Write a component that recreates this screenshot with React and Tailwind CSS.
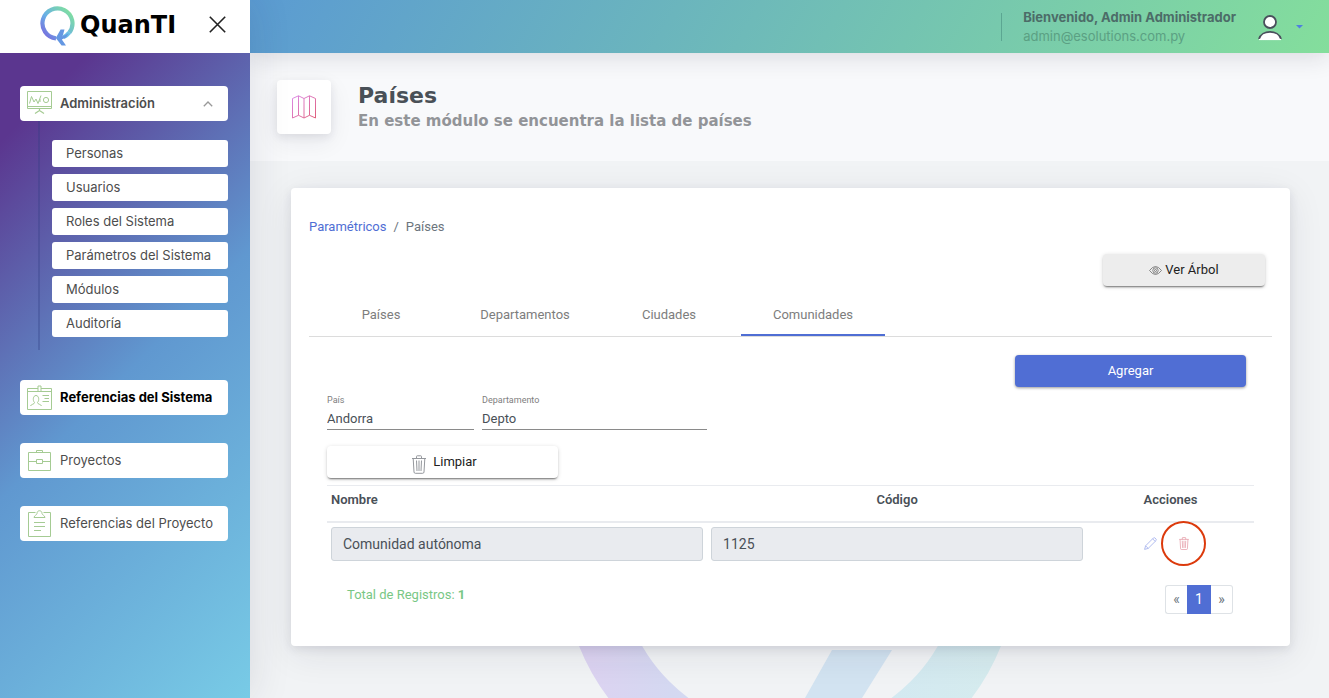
import { useState } from "react";
import clsx from "clsx";

const submenu = ["Personas", "Usuarios", "Roles del Sistema", "Parámetros del Sistema", "Módulos", "Auditoría"];
const tabs = ["Países", "Departamentos", "Ciudades", "Comunidades"];

function Logo() {
  return (
    <a href="#" className="flex items-center gap-1">
      <svg width="36" height="42" viewBox="0 0 36 42" fill="none" aria-hidden="true">
        <defs>
          <linearGradient id="logo-ring" x1="3" y1="32" x2="31" y2="6" gradientUnits="userSpaceOnUse">
            <stop offset="0" stopColor="#7a63dc" />
            <stop offset="0.45" stopColor="#68b0e6" />
            <stop offset="1" stopColor="#80dfa0" />
          </linearGradient>
        </defs>
        <path d="M16 32.3A15 15 0 1 1 29.3 26.6" stroke="url(#logo-ring)" strokeWidth="4.2" />
        <path d="M29.3 26.6A15 15 0 0 1 23.5 31.2" stroke="#6cbfe6" strokeWidth="4.2" />
        <path d="M24.5 23.5H20.6L15.8 32L21.6 39.6H26L21.8 33.4L26 31.6L28.6 27.6L22.6 30.2Z" fill="#6497e2" />
      </svg>
      <span className="mb-1 font-['DejaVu_Sans',sans-serif] text-[24px] leading-6 font-bold text-black">QuanTI</span>
    </a>
  );
}

function PresentationIcon() {
  return (
    <svg width="26" height="26" viewBox="0 0 26 26" fill="none" stroke="#a5cb93" aria-hidden="true">
      <path d="M0.5 0.5H24.5V17.500H0.5ZM1 15.500H24" />
      <path d="M12.5 17.500V19.500M8 22.500L12.5 19.500L17 22.500" strokeWidth="1.2" />
      <path d="M2.500 12.500L4.500 5.500L7 11L9 8L11 12.500L14 4.500" />
      <circle cx="19" cy="9" r="2.6" />
      <path d="M13 11V8" />
    </svg>
  );
}

function IdIcon() {
  return (
    <svg width="26" height="26" viewBox="0 0 26 26" fill="none" stroke="#a5cb93" aria-hidden="true">
      <path d="M11 3.500H0.500V24.500H24.500V3.500H14M0.500 6.500H11M14 6.500H24.500" />
      <path d="M11 1H14V6.500H11Z" />
      <path d="M3.500 21C4 19 7.500 19.500 7.500 17.500C5.500 15.500 6 10.500 9 10.500S12.500 15.500 10.500 17.500C10.500 19.500 14 19 14.500 21" />
      <path d="M15.500 10.500H22M17.500 13.500H22M15.500 16.500H22" />
    </svg>
  );
}

function BriefcaseIcon() {
  return (
    <svg width="26" height="26" viewBox="0 0 26 26" fill="none" stroke="#a5cb93" aria-hidden="true">
      <path d="M1.500 4.500H23.500V22.500H1.500ZM9.500 4.500V2.500H15.500V4.500M1.500 13.500H9.500M15.500 13.500H23.500" />
      <path d="M9.500 11.500H15.500V15.500H9.500Z" />
    </svg>
  );
}

function ClipboardIcon() {
  return (
    <svg width="26" height="28" viewBox="0 0 26 28" fill="none" stroke="#a5cb93" aria-hidden="true">
      <path d="M8.500 2.500H1.500V26.500H23.500V2.500H16.500" />
      <path d="M7 7.500C7.500 5 9.500 5.500 10 3.500C10 -0.200 15 -0.200 15 3.500C15.500 5.500 17.500 5 18 7.500Z" />
      <path d="M7 12.500H18M7 16.500H18M7 20.500H14" />
    </svg>
  );
}

function MapIcon() {
  return (
    <svg width="26" height="26" viewBox="0 0 26 26" fill="none" stroke="url(#map-stroke)" aria-hidden="true">
      <defs>
        <linearGradient id="map-stroke" x1="0" y1="0" x2="26" y2="26" gradientUnits="userSpaceOnUse">
          <stop offset="0" stopColor="#dc8ff0" />
          <stop offset="1" stopColor="#e05a72" />
        </linearGradient>
      </defs>
      <path d="M1.500 4.500L7.500 1.800L13 4.500L18.500 1.800L24.500 4.500V24L18.500 21.300L13 24L7.500 21.300L1.500 24Z" />
      <path d="M7.500 1.800V21.300M13 4.500V24M18.500 1.800V21.300" />
    </svg>
  );
}

function TrashIcon({ className }) {
  return (
    <svg viewBox="0 0 14 19" fill="none" stroke="currentColor" className={className} aria-hidden="true">
      <path d="M0 3.500H14M4.500 3.500V1.500Q4.500 0.800 5.200 0.800H8.800Q9.500 0.800 9.500 1.500V3.500" />
      <path d="M1.200 3.500L2 17Q2.100 18.300 3.300 18.300H10.700Q11.900 18.300 12 17L12.800 3.500" />
      <path d="M4.500 5.500L5 16M7 5.500V16M9.500 5.500L9 16" />
    </svg>
  );
}

function EyeIcon() {
  return (
    <svg width="13" height="9" viewBox="0 0 13 9" fill="none" stroke="#6b6b6b" strokeWidth="0.8" aria-hidden="true">
      <path d="M0.500 4.500Q6.500 -3.500 12.500 4.500Q6.500 12.500 0.500 4.500Z" />
      <circle cx="6.500" cy="4.500" r="2.700" />
      <circle cx="6.500" cy="4.500" r="1" />
    </svg>
  );
}

function PencilIcon() {
  return (
    <svg width="13" height="13" viewBox="0 0 13 13" fill="none" stroke="#a9b6ee" strokeWidth="0.9" aria-hidden="true">
      <path d="M0.600 12.400L1.600 8.800L9.400 1Q10.200 0.300 11 1L12 2Q12.700 2.800 12 3.600L4.200 11.400Z" />
      <path d="M1.600 8.800L4.200 11.400M8.600 1.800L11.200 4.400" />
    </svg>
  );
}

function UserIcon() {
  return (
    <svg width="26" height="28" viewBox="0 0 26 28" fill="#fff" stroke="#4a4f5c" strokeWidth="1.800" aria-hidden="true">
      <circle cx="13" cy="9" r="6" />
      <path d="M2 26C4.500 16.500 21.500 16.500 24 26" />
      <path d="M2 26.500H24" stroke="#fff" strokeWidth="1.200" />
    </svg>
  );
}

function MenuItem({ icon, label, active, open }) {
  return (
    <a
      href="#"
      className={clsx(
        "flex h-[35px] items-center rounded-[4px] bg-white pr-[15px] pl-[7px] text-[13px] whitespace-nowrap text-[#4d4d4d]",
        active && "font-bold text-black!",
        open && "font-semibold"
      )}
    >
      <span className="w-[33px] shrink-0">{icon}</span>
      <span className="min-w-0 flex-1">{label}</span>
      {open && (
        <svg width="10" height="6" viewBox="0 0 10 6" fill="none" stroke="#999" strokeWidth="1.300" aria-hidden="true">
          <path d="M0.800 5.300L5 1L9.200 5.300" />
        </svg>
      )}
    </a>
  );
}

function Sidebar() {
  return (
    <aside className="relative z-20 flex w-[250px] shrink-0 flex-col shadow-[0_0_40px_rgba(30,30,60,0.12)]">
      <div className="flex h-[53px] items-center justify-between bg-white pr-6 pl-10">
        <Logo />
        <button type="button" aria-label="Cerrar menú" className="mb-1">
          <svg width="17" height="17" viewBox="0 0 17 17" stroke="#222" strokeWidth="1.600" aria-hidden="true">
            <path d="M0.800 0.800L16.200 16.200M16.200 0.800L0.800 16.200" />
          </svg>
        </button>
      </div>
      <nav className="flex-1 bg-[linear-gradient(135deg,#5b368f_10%,#6098d0_50%,#78cbe6_100%)] pt-[33px] pr-[22px] pl-5">
        <MenuItem icon={<PresentationIcon />} label="Administración" open />
        <ul className="mb-[30px] ml-[18px] flex flex-col gap-[7px] border-l-2 border-[#2d3c82]/30 pt-[19px] pb-[13px] pl-3">
          {submenu.map((item) => (
            <li key={item}>
              <a href="#" className="flex h-[27px] items-center rounded-[3px] bg-white px-[14px] text-[13px] text-[#4d4d4d]">
                {item}
              </a>
            </li>
          ))}
        </ul>
        <div className="flex flex-col gap-7">
          <MenuItem icon={<IdIcon />} label="Referencias del Sistema" active />
          <MenuItem icon={<BriefcaseIcon />} label="Proyectos" />
          <MenuItem icon={<ClipboardIcon />} label="Referencias del Proyecto" />
        </div>
      </nav>
    </aside>
  );
}

function Header() {
  return (
    <header className="relative z-10 flex h-[53px] items-center justify-end bg-[linear-gradient(120deg,#5b9bd2,#84de9c)] pr-[26px] shadow-[0_4px_24px_rgba(30,30,60,0.14)]">
      <div className="h-7 w-px bg-[#4a8f80]/60" />
      <div className="ml-[21px] text-[13px] leading-[19px]">
        <p className="font-bold text-[#4c6c68]">Bienvenido, Admin Administrador</p>
        <p className="text-[#5ba083]">admin@esolutions.com.py</p>
      </div>
      <button type="button" aria-label="Cuenta" className="ml-[21px] flex items-center gap-[13px]">
        <UserIcon />
        <svg width="7" height="4" viewBox="0 0 7 4" fill="#4f7fe0" aria-hidden="true">
          <path d="M0 0H7L3.500 3.600Z" />
        </svg>
      </button>
    </header>
  );
}

function Watermark() {
  return (
    <svg
      viewBox="0 0 458 365"
      width="458"
      height="365"
      fill="none"
      className="absolute bottom-0 left-1/2 -translate-x-1/2"
      aria-hidden="true"
    >
      <defs>
        <linearGradient id="wm-ring" x1="30" y1="0" x2="428" y2="0" gradientUnits="userSpaceOnUse">
          <stop offset="0" stopColor="#dcd3f1" />
          <stop offset="0.200" stopColor="#d4d8f1" />
          <stop offset="0.750" stopColor="#d3e9f1" />
          <stop offset="1" stopColor="#d5ebee" />
        </linearGradient>
      </defs>
      <circle cx="229" cy="228" r="199" stroke="url(#wm-ring)" strokeWidth="57" />
      <path d="M271 317H331L301 365H244Z" fill="#d2e3f1" />
    </svg>
  );
}

function Field({ id, label, value, className }) {
  return (
    <div className={clsx("border-b border-[#8a8a8a]", className)}>
      <label htmlFor={id} className="block text-[9px] leading-[14px] text-[#808080]">{label}</label>
      <input id={id} defaultValue={value} className="block h-[22px] w-full text-[13px] text-[#495057] outline-none" />
    </div>
  );
}

function CommunityTable() {
  const cell = "block h-[34px] w-full rounded-[3px] border border-[#ced4da] bg-[#e9ebef] px-[11px] text-[14px] text-[#495057]";
  return (
    <table className="mt-[7px] w-full table-fixed border-t border-[#e9ebef] text-[13px] text-[#495057]">
      <thead>
        <tr className="h-9 border-b-2 border-[#e9ebef]">
          <th className="w-[41%] px-1 pb-2 text-left font-semibold">Nombre</th>
          <th className="w-[41%] px-1 pb-2 text-center font-semibold">Código</th>
          <th className="px-1 pb-2 text-center font-semibold">Acciones</th>
        </tr>
      </thead>
      <tbody>
        <tr>
          <td className="p-1"><input aria-label="Nombre" readOnly value="Comunidad autónoma" className={cell} /></td>
          <td className="p-1"><input aria-label="Código" readOnly value="1125" className={cell} /></td>
          <td className="p-0">
            <div className="flex h-[42px] items-center pl-[57px]">
              <button type="button" aria-label="Editar"><PencilIcon /></button>
              <button
                type="button"
                aria-label="Eliminar"
                className="-my-1 ml-1 flex size-[45px] items-center justify-center rounded-full border-2 border-[#dc3a0c] text-[#e3939f]"
              >
                <TrashIcon className="h-[13px] w-[10px]" />
              </button>
            </div>
          </td>
        </tr>
      </tbody>
    </table>
  );
}

export default function App() {
  const [tab, setTab] = useState("Comunidades");

  return (
    <div className="flex min-h-screen bg-[#f1f3f5] font-[Inter,sans-serif]">
      <Sidebar />
      <div className="flex min-w-0 flex-1 flex-col">
        <Header />
        <main className="relative flex-1 overflow-hidden font-[Roboto,sans-serif]">
          <Watermark />
          <div className="flex h-[108px] items-center bg-[#f8f9fb] pl-[27px]">
            <div className="flex size-[54px] items-center justify-center rounded-[4px] bg-white shadow-[0_8px_24px_rgba(30,30,60,0.07),0_3px_8px_rgba(30,30,60,0.09)]">
              <MapIcon />
            </div>
            <div className="ml-[27px] font-['DejaVu_Sans',sans-serif] font-bold">
              <h1 className="text-[22px] leading-7 text-[#495057]">Países</h1>
              <p className="text-[15px] leading-[22px] text-[#929498]">En este módulo se encuentra la lista de países</p>
            </div>
          </div>

          <section className="relative mt-[27px] mr-[39px] mb-[52px] ml-[41px] rounded-[4px] bg-white pt-[29px] pr-[18px] pb-8 pl-[18px] shadow-[0_8px_36px_rgba(30,30,60,0.09),0_3px_10px_rgba(30,30,60,0.10)]">
            <nav className="flex gap-[7px] text-[13px] leading-5 text-[#6c757d]">
              <a href="#" className="text-[#4f6ed4]">Paramétricos</a>
              <span>/</span>
              <span>Países</span>
            </nav>

            <div className="mt-[17px] flex justify-end pr-[7px]">
              <button
                type="button"
                className="flex h-8 w-[162px] items-center justify-center gap-[3px] rounded-[4px] bg-[#ededed] text-[13px] text-[#212121] shadow-[0_2px_2px_-1px_rgba(0,0,0,0.5),0_1px_4px_rgba(0,0,0,0.16)]"
              >
                <EyeIcon />
                Ver Árbol
              </button>
            </div>

            <div role="tablist" className="mt-[6px] flex border-b border-[#dcdcdc]">
              {tabs.map((name) => (
                <button
                  key={name}
                  type="button"
                  role="tab"
                  aria-selected={tab === name}
                  onClick={() => setTab(name)}
                  className={clsx(
                    "h-11 w-36 border-b-2 pt-1 text-[13px] text-[#7d7d7d]",
                    tab === name ? "border-[#4f6ed4]" : "border-transparent"
                  )}
                >
                  {name}
                </button>
              ))}
            </div>

            <div className="px-[18px] pt-[18px]">
              <div className="flex justify-end pr-2">
                <button
                  type="button"
                  className="h-8 w-[231px] rounded-[4px] bg-[#506ed4] text-[13px] text-white shadow-[0_1px_3px_rgba(0,0,0,0.4)]"
                >
                  Agregar
                </button>
              </div>

              <div className="mt-[6px] flex gap-2">
                <Field id="pais" label="País" value="Andorra" className="w-[147px]" />
                <Field id="departamento" label="Departamento" value="Depto" className="w-[225px]" />
              </div>

              <button
                type="button"
                className="mt-4 flex h-8 w-[231px] items-center justify-center gap-[7px] rounded-[4px] bg-white pl-1 text-[13px] text-[#212121] shadow-[0_2px_2px_-1px_rgba(0,0,0,0.5),0_1px_4px_rgba(0,0,0,0.16)]"
              >
                <TrashIcon className="mt-1 h-[19px] w-[14px] text-[#95989d]" />
                Limpiar
              </button>

              <CommunityTable />

              <div className="mt-5 flex items-start justify-between pr-[21px] pl-5">
                <p className="text-[13px] leading-5 text-[#79c785]">
                  Total de Registros: <b>1</b>
                </p>
                <div className="flex h-[29px] text-[14px] text-[#6c757d]">
                  <button type="button" className="w-[22px] rounded-l-[3px] border border-r-0 border-[#dee2e6]">«</button>
                  <button type="button" className="w-6 bg-[#506ed4] text-white">1</button>
                  <button type="button" className="w-[22px] rounded-r-[3px] border border-l-0 border-[#dee2e6]">»</button>
                </div>
              </div>
            </div>
          </section>
        </main>
      </div>
    </div>
  );
}
